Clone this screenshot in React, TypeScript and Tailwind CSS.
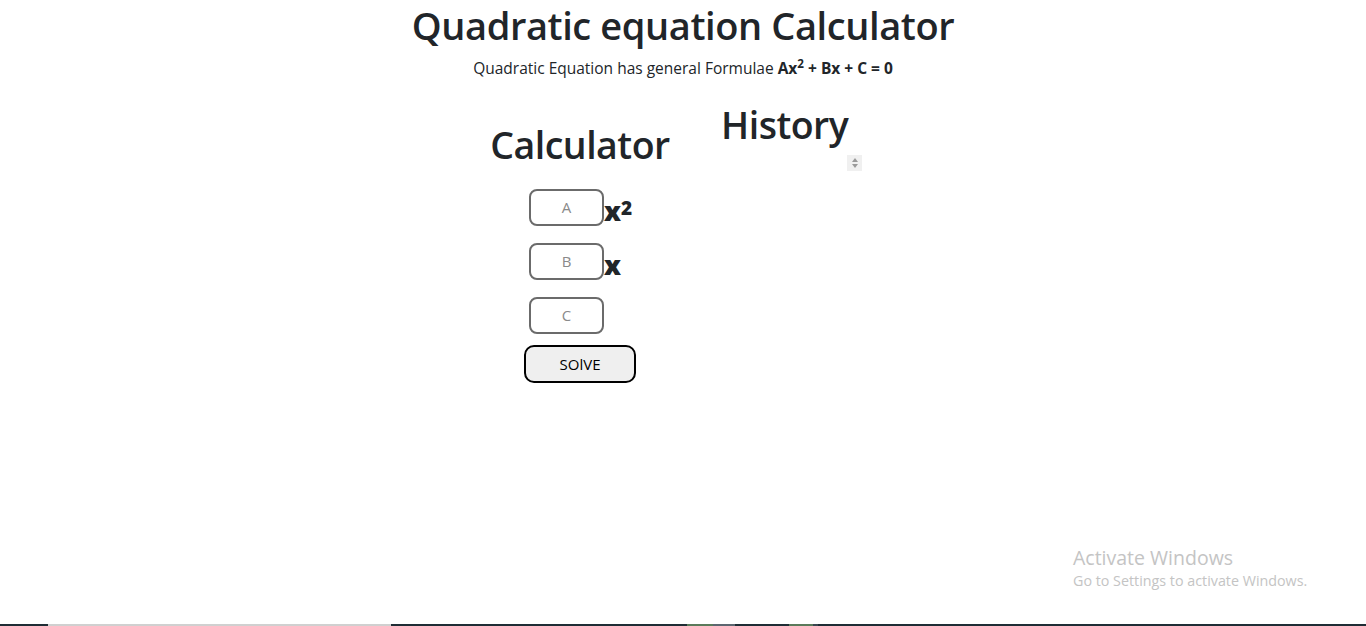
import React from "react";

const FONT = { fontFamily: '"Open Sans", "Noto Sans", sans-serif' };

const CoefInput = ({ label, suffix }: { label: string; suffix?: React.ReactNode }) => (
  <div className="flex flex-row items-center h-[37px]">
    <input
      type="text"
      placeholder={label}
      className="w-[75px] h-[37px] border-2 border-[#6b6b6b] rounded-[8px] text-center text-[15px] text-[#212529] placeholder:text-[#8a8a8a] outline-none bg-white"
    />
    <span className="text-[27px] font-black text-[#212529] leading-none mt-[6px]">{suffix}</span>
  </div>
);

export default function App() {
  return (
    <div className="relative w-[1366px] h-[626px] bg-white overflow-hidden text-[#212529]" style={FONT}>
      <div className="flex flex-col items-center pt-[3px]">
        <h1 className="text-[38px] font-semibold leading-[1.2] tracking-[-0.4px]">Quadratic equation Calculator</h1>
        <p className="text-[15.5px] mt-[8px]">
          Quadratic Equation has general Formulae <b>Ax<sup>2</sup> + Bx + C = 0</b>
        </p>

        <div className="flex flex-row items-start gap-[46px] mt-[22px] ml-[-19px]">
          <div className="w-[190px] flex flex-col items-center pt-[20px]">
            <h2 className="text-[37.5px] font-semibold leading-[1.2] tracking-[-0.5px]">Calculator</h2>
            <div className="self-start pl-[44px] flex flex-col gap-[17px] mt-[22px]">
              <CoefInput
                label="A"
                suffix={
                  <>
                    x<sup className="text-[19px] relative top-[-6px]">2</sup>
                  </>
                }
              />
              <CoefInput label="B" suffix="x" />
              <CoefInput label="C" />
            </div>
            <button className="mt-[11px] w-[112px] h-[38px] border-2 border-black rounded-[10px] bg-[#efefef] text-[15px] text-black">
              SOlVE
            </button>
          </div>
          <div className="w-[141px] flex flex-col">
            <h2 className="text-[37.5px] font-semibold leading-[1.2] tracking-[-0.5px]">History</h2>
            <div className="self-end w-[15px] h-[16px] bg-[#f0f0f0] flex flex-col items-center justify-center mt-[8px]">
              <svg width="8" height="12" viewBox="0 0 8 12">
                <path d="M4 1 L7 5 H1 Z" fill="#9a9a9a" />
                <path d="M4 11 L7 7 H1 Z" fill="#9a9a9a" />
              </svg>
            </div>
          </div>
        </div>
      </div>

      <div className="absolute left-[1073px] top-[546px] text-[#c4c4c4]">
        <div className="text-[19.5px] leading-[24px]">Activate Windows</div>
        <div className="text-[14.3px] leading-[20px] mt-[1px]">Go to Settings to activate Windows.</div>
      </div>

      <div className="absolute left-0 bottom-0 w-full h-[2px] flex flex-row">
        <div className="w-[48px] bg-[#1f2d35]" />
        <div className="w-[343px] bg-[#d0d0d0]" />
        <div className="w-[296px] bg-[#1f2d35]" />
        <div className="w-[26px] bg-[#5a7a5a]" />
        <div className="w-[22px] bg-[#5c6670]" />
        <div className="w-[54px] bg-[#1f2d35]" />
        <div className="w-[24px] bg-[#5a7a5a]" />
        <div className="w-[5px] bg-[#3a4650]" />
        <div className="flex-1 bg-[#1f2d35]" />
      </div>
    </div>
  );
}
